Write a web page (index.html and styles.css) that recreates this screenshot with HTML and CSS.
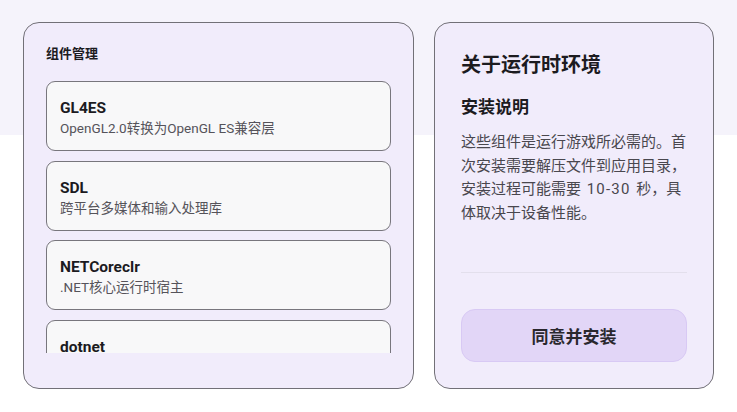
FILE: index.html
```html
<!DOCTYPE html>
<html lang="zh-CN">
<head>
<meta charset="utf-8">
<link rel="stylesheet" href="styles.css">
</head>
<body>
<div class="bg-band"></div>
<main class="layout">
  <section class="card list-card">
    <h2 class="list-title">组件管理</h2>
    <div class="list-scroll">
      <div class="item">
        <div class="item-name">GL4ES</div>
        <div class="item-desc">OpenGL2.0转换为OpenGL ES兼容层</div>
      </div>
      <div class="item">
        <div class="item-name">SDL</div>
        <div class="item-desc">跨平台多媒体和输入处理库</div>
      </div>
      <div class="item">
        <div class="item-name">NETCoreclr</div>
        <div class="item-desc">.NET核心运行时宿主</div>
      </div>
      <div class="item">
        <div class="item-name">dotnet</div>
        <div class="item-desc">.NET运行时库</div>
      </div>
    </div>
  </section>
  <section class="card info-card">
    <h1 class="info-title">关于运行时环境</h1>
    <h3 class="info-sub">安装说明</h3>
    <p class="info-text">这些组件是运行游戏所必需的。首次安装需要解压文件到应用目录，安装过程可能需要 <span class="num">10-30</span> 秒，具体取决于设备性能。</p>
    <div class="divider"></div>
    <button class="agree-btn">同意并安装</button>
  </section>
</main>
</body>
</html>
```
FILE: styles.css
```css
html, body {
  margin: 0;
  padding: 0;
  width: 737px;
  height: 412px;
  overflow: hidden;
  background: #ffffff;
  font-family: Roboto, "Noto Sans CJK SC", sans-serif;
  color: #1c1b1f;
}
body { position: relative; }
.bg-band {
  position: absolute;
  left: 0; top: 0;
  width: 100%;
  height: 135px;
  background: #f5f3fb;
}
.layout {
  position: relative;
  display: flex;
  gap: 20px;
  padding: 22px 23px 23px 23px;
  height: 412px;
  box-sizing: border-box;
}
.card {
  box-sizing: border-box;
  background: #f1ecfb;
  border: 1.5px solid #727077;
  border-radius: 16px;
  height: 367px;
}
.list-card {
  width: 391px;
  display: flex;
  flex-direction: column;
  padding: 22px 22px 35px 22px;
}
.list-title {
  margin: 0;
  font-size: 13px;
  line-height: 18px;
  font-weight: 700;
}
.list-scroll {
  margin-top: 18px;
  flex: 1;
  overflow: hidden;
  display: flex;
  flex-direction: column;
  gap: 9.7px;
}
.item {
  flex: none;
  box-sizing: border-box;
  height: 70px;
  background: #f8f8f9;
  border: 1.5px solid #78767d;
  border-radius: 9px;
  padding: 16px 13px 11px 13px;
}
.item-name {
  font-size: 15.5px;
  line-height: 21px;
  font-weight: 700;
  color: #1c1b1f;
}
.item-desc {
  font-size: 13.5px;
  line-height: 19px;
  color: #55535a;
}
.info-card {
  width: 280px;
  display: flex;
  flex-direction: column;
  padding: 28px 26px 26px 26px;
}
.info-title {
  margin: 0;
  font-size: 20px;
  line-height: 28px;
  font-weight: 700;
}
.info-sub {
  margin: 16px 0 0 0;
  font-size: 17px;
  line-height: 24px;
  font-weight: 700;
}
.info-text {
  margin: 12px 0 0 0;
  font-size: 15px;
  line-height: 23.5px;
  word-spacing: 2px;
  color: #49474e;
}
.num {
  letter-spacing: 1.2px;
}
.divider {
  margin-top: auto;
  height: 1px;
  background: #e3dfec;
}
.agree-btn {
  margin-top: 36px;
  height: 53px;
  border: 1px solid #d8c9f4;
  border-radius: 14px;
  background: #e2d6f7;
  font-family: Roboto, "Noto Sans CJK SC", sans-serif;
  font-size: 17px;
  font-weight: 700;
  color: #2a282e;
}
```
